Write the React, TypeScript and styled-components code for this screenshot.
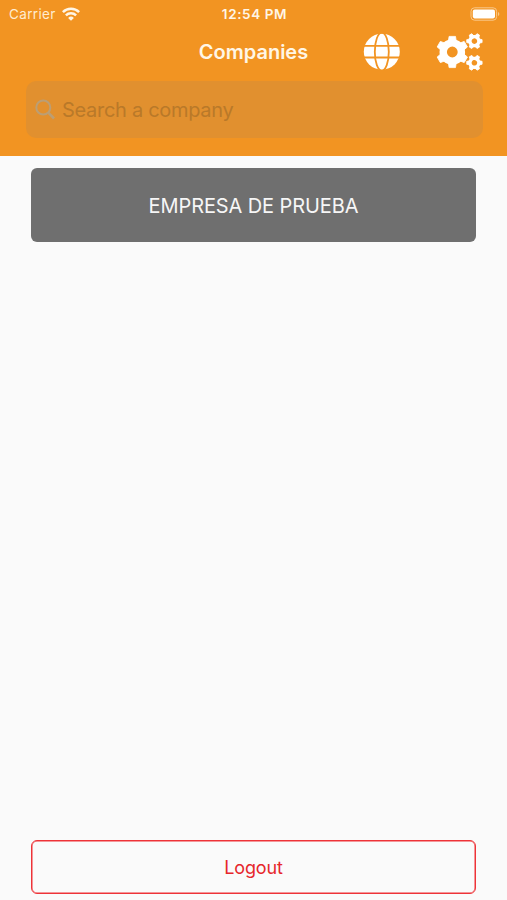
import React from "react";
import styled, { createGlobalStyle } from "styled-components";

const GlobalStyle = createGlobalStyle`
  * { box-sizing: border-box; }
  body { margin: 0; background: #fafafa; }
`;

const Screen = styled.div`
  display: flex;
  flex-direction: column;
  width: 100%;
  height: 100vh;
  overflow: hidden;
  background: #fafafa;
  font-family: Inter, "Liberation Sans", sans-serif;
`;

const Header = styled.header`
  flex: none;
  height: 156px;
  background: #f29422;
  color: #fff6e6;
`;

const StatusBar = styled.div`
  display: grid;
  grid-template-columns: 1fr auto 1fr;
  align-items: center;
  height: 27px;
  padding: 0 7px 0 9px;
  line-height: 16px;
`;

const Carrier = styled.div`
  display: flex;
  align-items: center;
  gap: 6px;
  color: #ffecd0;
  font-size: 13.5px;
  letter-spacing: 0.35px;
`;

const Clock = styled.div`
  font-weight: 600;
  font-size: 13.5px;
  letter-spacing: 0.6px;
`;

const Battery = styled.svg`
  justify-self: end;
`;

const NavBar = styled.div`
  display: grid;
  grid-template-columns: 1fr auto 1fr;
  align-items: center;
  height: 50px;
  padding: 0 24px;
`;

const Title = styled.h1`
  grid-column: 2;
  margin: 0;
  font-size: 20px;
  line-height: 24px;
  font-weight: 600;
`;

const Actions = styled.div`
  display: flex;
  align-items: center;
  justify-content: flex-end;
  gap: 35px;
  color: #fff;
`;

const IconButton = styled.button`
  display: flex;
  padding: 0;
  border: 0;
  background: none;
  color: inherit;
`;

const SearchField = styled.label`
  display: flex;
  align-items: center;
  gap: 7px;
  height: 57px;
  margin: 4px 24px 0 26px;
  padding: 0 9px;
  border-radius: 10px;
  background: #e1902f;
`;

const SearchInput = styled.input`
  flex: 1;
  min-width: 0;
  padding: 0;
  border: 0;
  outline: 0;
  background: transparent;
  font: 400 20px/24px Inter, "Liberation Sans", sans-serif;
  letter-spacing: -0.3px;
  color: #7d5529;
  &::placeholder { color: #b97929; opacity: 1; }
`;

const CompanyList = styled.main`
  flex: 1;
  padding: 12px 31px;
`;

const CompanyButton = styled.button`
  display: block;
  width: 100%;
  height: 74px;
  padding: 2px 0 0;
  border: 0;
  border-radius: 6px;
  background: #6f6f6f;
  color: #f6f6f6;
  font: 400 20px/24px Inter, "Liberation Sans", sans-serif;
  letter-spacing: -0.1px;
`;

const Footer = styled.footer`
  flex: none;
  padding: 0 31px 6px;
`;

const LogoutButton = styled.button`
  display: block;
  width: 100%;
  height: 54px;
  padding: 2px 0 0;
  border: 1px solid #ee3338;
  box-shadow: inset 0 0 0 0.5px #ee3338;
  border-radius: 6px;
  background: transparent;
  color: #e6262b;
  font: 400 18px/22px Inter, "Liberation Sans", sans-serif;
  letter-spacing: -0.15px;
`;

const WifiIcon = () => (
  <svg width="18" height="14" viewBox="0 0 18 14" fill="none" stroke="#fff6e6" strokeWidth="2.5">
    <path d="M.9 5.1a11.5 11.5 0 0 1 16.2 0" />
    <path d="M3.9 8.3a7.3 7.3 0 0 1 10.2 0" />
    <path d="M9 13.8 6.1 10.9a4.1 4.1 0 0 1 5.8 0Z" fill="#fff6e6" stroke="none" />
  </svg>
);

const SearchIcon = () => (
  <svg width="20" height="21" viewBox="0 0 20 21" fill="none" stroke="#bb9e74" strokeWidth="2">
    <circle cx="8.3" cy="8.5" r="7" />
    <path d="m13.3 13.7 5.7 5.8" strokeWidth="2.6" />
  </svg>
);

const GlobeIcon = () => (
  <svg width="38" height="38" viewBox="0 0 38 38">
    <circle cx="18.8" cy="18.7" r="18" fill="#fff" />
    <g fill="none" stroke="#f29422" strokeWidth="1.8">
      <ellipse cx="18.8" cy="18.7" rx="7" ry="19" />
      <path d="M0 12.8h38M0 24.5h38" />
    </g>
  </svg>
);

type GearProps = {
  x: number;
  y: number;
  outer: number;
  body: number;
  hole: number;
  tooth: number;
  turn?: number;
};

const Gear = ({ x, y, outer, body, hole, tooth, turn = 0 }: GearProps) => (
  <g transform={`translate(${x} ${y}) rotate(${turn})`}>
    <circle r={(body + hole) / 2} fill="none" stroke="#fff" strokeWidth={body - hole} />
    {[0, 60, 120, 180, 240, 300].map((angle) => (
      <path
        key={angle}
        transform={`rotate(${angle})`}
        fill="#fff"
        stroke="#fff"
        strokeWidth="0.8"
        strokeLinejoin="round"
        d={`M${-tooth / 2} ${-outer + 0.4}H${tooth / 2}L${tooth / 2 + 0.7} ${-body + 1.5}H${-tooth / 2 - 0.7}Z`}
      />
    ))}
  </g>
);

const GearsIcon = () => (
  <svg width="47" height="38" viewBox="0 0 47 38">
    <Gear x={16.3} y={19} outer={16} body={12.8} hole={5.4} tooth={6.4} />
    <Gear x={38.4} y={8.1} outer={8.1} body={6.1} hole={2.8} tooth={2.9} turn={30} />
    <Gear x={38.4} y={29.8} outer={8.1} body={6.1} hole={2.8} tooth={2.9} turn={30} />
  </svg>
);

export default function App() {
  return (
    <Screen>
      <GlobalStyle />
      <Header>
        <StatusBar>
          <Carrier>
            <span>Carrier</span>
            <WifiIcon />
          </Carrier>
          <Clock>12:54 PM</Clock>
          <Battery width="30" height="14" viewBox="0 0 30 14">
            <rect x="1" y=".8" width="25.6" height="12.4" rx="3.5" fill="none" stroke="#f9c88b" strokeWidth="1" />
            <rect x="2.8" y="2.6" width="22.2" height="8.8" rx="1.8" fill="#fff" />
            <path d="M28 5v4c1.8-.7 1.8-3.3 0-4Z" fill="#f9c88b" />
          </Battery>
        </StatusBar>
        <NavBar>
          <Title>Companies</Title>
          <Actions>
            <IconButton aria-label="Language"><GlobeIcon /></IconButton>
            <IconButton aria-label="Settings"><GearsIcon /></IconButton>
          </Actions>
        </NavBar>
        <SearchField>
          <SearchIcon />
          <SearchInput placeholder="Search a company" aria-label="Search a company" />
        </SearchField>
      </Header>
      <CompanyList>
        <CompanyButton>EMPRESA DE PRUEBA</CompanyButton>
      </CompanyList>
      <Footer>
        <LogoutButton>Logout</LogoutButton>
      </Footer>
    </Screen>
  );
}
